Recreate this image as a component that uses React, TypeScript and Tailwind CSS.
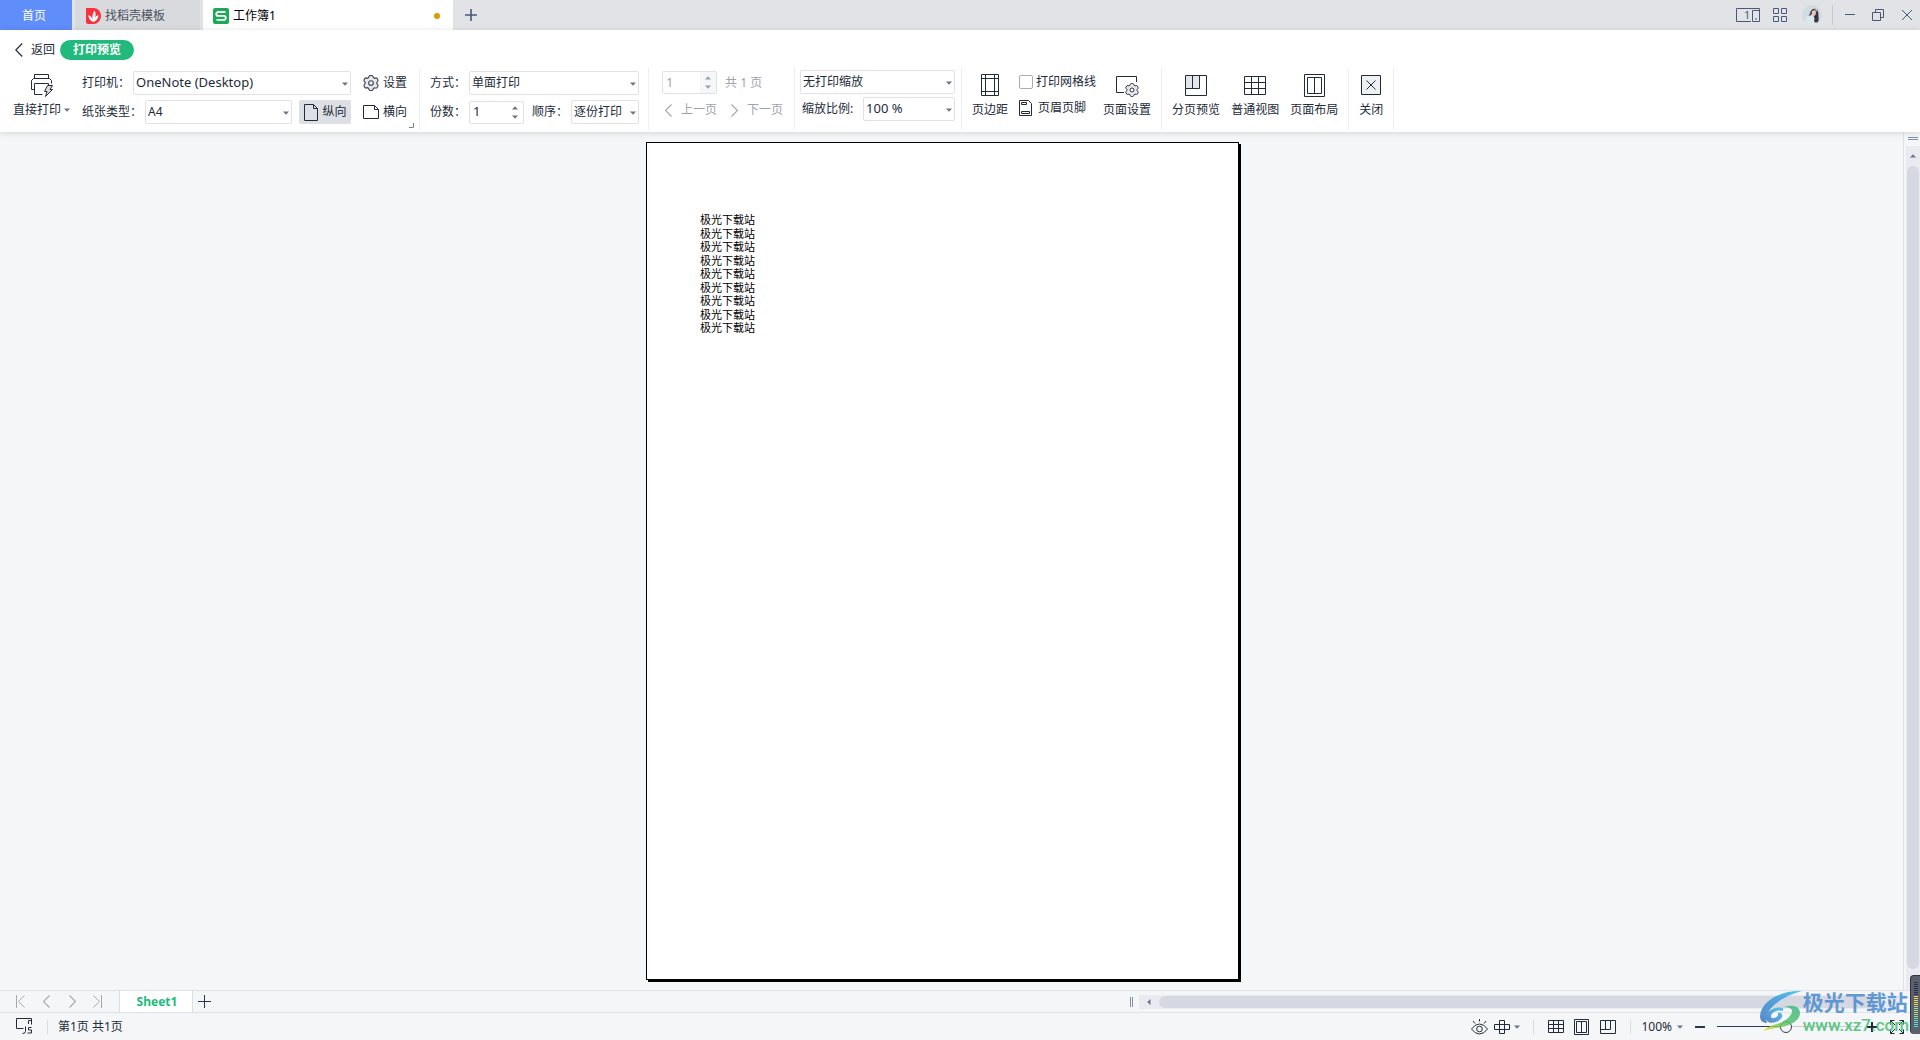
import React, { useState } from 'react';

interface IconProps {
    className?: string;
}

const Caret: React.FC<IconProps> = ({ className = '' }) => (
    <svg width="6" height="4" viewBox="0 0 6 4" className={className}>
        <path d="M0 .5h6L3 3.8z" fill="#6b7488" />
    </svg>
);

const Chevron: React.FC<{ dir: 'left' | 'right'; w?: number; h?: number; className?: string }> = ({ dir, w = 7, h = 13, className = '' }) => (
    <svg width={w} height={h} viewBox="0 0 7 13" fill="none" stroke="currentColor" strokeWidth="1.1" className={className}>
        <path d={dir === 'left' ? 'M6.5 .5l-6 6 6 6' : 'M.5 .5l6 6-6 6'} />
    </svg>
);

const GearShape: React.FC = () => (
    <>
        <path d="M6 1.4L7 .5h2l1 .9.4 1.3 1.1.6 1.5-.4 1.1.5.9 1.7-.3 1.4-.9 1v1.1l.9 1 .3 1.4-.9 1.7-1.1.5-1.5-.4-1.1.6L10 14.6l-1 .9H7l-1-.9-.4-1.3-1.1-.6-1.5.4-1.1-.5L1 10.9l.3-1.4.9-1V7.400l-.9-1L1 5l.9-1.700L3 2.900l1.500.4 1.100-.6z" fill="#e7e9ec" stroke="currentColor" strokeWidth="1.1" />
        <circle cx="8" cy="8" r="2.300" fill="#fff" stroke="currentColor" strokeWidth="1.1" />
    </>
);

const GearIcon: React.FC = () => (
    <svg width="16" height="16" viewBox="0 0 16 16" className="text-[#3b4252]">
        <GearShape />
    </svg>
);

const PrinterIcon: React.FC = () => (
    <svg width="24" height="24" viewBox="0 0 24 24" fill="none" stroke="currentColor">
        <path d="M4.500 5.500v-4h14v4M4.500 16.500h-3v-9l2-2h16l2 2v3M12.500 21.500h-8v-11h14v2" />
        <path d="M17.500 12.500h5l-2.500 4h2.500l-7 7 1.500-5h-2.500z" fill="#d9dce0" />
    </svg>
);

const PortraitIcon: React.FC = () => (
    <svg width="14" height="17" viewBox="0 0 14 17" fill="none" stroke="currentColor">
        <path d="M.5 .5h9l4 4v12H.5zM9.500 .5v4h4" />
    </svg>
);

const LandscapeIcon: React.FC = () => (
    <svg width="16" height="14" viewBox="0 0 16 14" fill="none" stroke="currentColor">
        <path d="M.5 .5h11l4 4v9H.5zM11.500 .5v4h4" />
    </svg>
);

const MarginsIcon: React.FC = () => (
    <svg width="18" height="22" viewBox="0 0 18 22" fill="none" stroke="currentColor">
        <path d="M.5 .5h17v21H.5zM4.500 .5v21M13.500 .5v21M.5 4.500h17M.5 17.500h17" />
    </svg>
);

const HeaderFooterIcon: React.FC = () => (
    <svg width="13" height="16" viewBox="0 0 13 16" fill="none" stroke="currentColor">
        <path d="M.5 .5h9l3 3v12H.5zM2.500 2.500h5v2h-5zM2.500 11.500h8v2h-8z" />
    </svg>
);

const PageSetupIcon: React.FC = () => (
    <svg width="23" height="24" viewBox="0 0 23 24" fill="none" stroke="currentColor">
        <path d="M8 19.500H.5v-16h20V9" />
        <svg x="9" y="10" width="14" height="14" viewBox="0 0 16 16">
            <GearShape />
        </svg>
    </svg>
);

const BreakPreviewIcon: React.FC<{ filled?: boolean; w?: number; h?: number }> = ({ filled, w = 22, h = 21 }) => {
    const x = Math.round(w * 0.64) + 0.5;
    const mid = Math.round(w * 0.32) + 0.5;
    const y = Math.round(h * 0.64) + 0.5;
    return (
        <svg width={w} height={h} fill="none" stroke="currentColor">
            {filled && <path d={`M.5 .5H${x}V${y}H.5z`} fill="#e3e5e8" stroke="none" />}
            <path d={`M.5 .5h${w - 1}v${h - 1}H.5zM.5 ${y}H${x}V.5M${mid} .5V${y}`} />
        </svg>
    );
};

const GridIcon: React.FC<{ w?: number; h?: number }> = ({ w = 22, h = 19 }) => {
    const cx = Math.round((w - 1) / 3);
    const cy = Math.round((h - 1) / 3);
    return (
        <svg width={w} height={h} fill="none" stroke="currentColor">
            <path d={`M.5 .5h${w - 1}v${h - 1}H.5zM${cx + 0.5} .5v${h - 1}M${cx * 2 + 0.5} .5v${h - 1}M.5 ${cy + 0.5}h${w - 1}M.5 ${cy * 2 + 0.5}h${w - 1}`} />
        </svg>
    );
};

const PageLayoutIcon: React.FC<{ w?: number; h?: number; inset?: number }> = ({ w = 21, h = 23, inset = 3 }) => (
    <svg width={w} height={h} fill="none" stroke="currentColor">
        <path d={`M.5 .5h${w - 1}v${h - 1}H.5zM${inset + 0.5} ${inset + 0.5}h${w - 1 - inset * 2}v${h - 1 - inset * 2}h-${w - 1 - inset * 2}zM${Math.floor(w / 2) + 0.5} ${inset + 0.5}v${h - 1 - inset * 2}`} />
    </svg>
);

const CloseBoxIcon: React.FC = () => (
    <svg width="20" height="20" viewBox="0 0 20 20" fill="#eef0f2" stroke="currentColor">
        <path d="M.5 .5h19v19H.5z" />
        <path d="M5.500 5.500l9 9M14.500 5.500l-9 9" />
    </svg>
);

interface SelectProps {
    id: string;
    options: string[];
    className: string;
}

const SelectBox: React.FC<SelectProps> = ({ id, options, className }) => (
    <div className={`relative h-6 ${className}`}>
        <select id={id} aria-label={id} className="h-full w-full appearance-none rounded-xs border border-[#e0e2e7] bg-white pl-0.5 pr-4">
            {options.map((o) => (
                <option key={o}>{o}</option>
            ))}
        </select>
        <Caret className="pointer-events-none absolute right-[3px] top-[11px]" />
    </div>
);

const NumberBox: React.FC<{ id: string; disabled?: boolean }> = ({ id, disabled }) => (
    <div className="flex h-[23px] w-[55px] overflow-hidden rounded-xs border border-[#e0e2e7]">
        <input id={id} aria-label={id} defaultValue="1" disabled={disabled} className="min-w-0 flex-1 pl-[3px] text-[13px]" />
        <div className={`flex w-4 flex-col items-center justify-between py-1 ${disabled ? 'bg-[#f3f4f7] opacity-70' : ''}`}>
            <button aria-label="+" disabled={disabled} className="flex"><Caret className="rotate-180" /></button>
            <button aria-label="-" disabled={disabled} className="flex"><Caret /></button>
        </div>
    </div>
);

const BigButton: React.FC<{ label: string; icon: React.ReactNode; caret?: boolean }> = ({ label, icon, caret }) => (
    <button className="flex flex-col items-center gap-1 self-start pt-0.5">
        <span className="flex h-6 items-center justify-center">{icon}</span>
        <span className="flex items-center leading-[18px]">
            {label}
            {caret && <Caret className="ml-[3px]" />}
        </span>
    </button>
);

const Group: React.FC<{ className: string; children: React.ReactNode }> = ({ className, children }) => (
    <div className={`relative flex h-[62px] shrink-0 border-r border-[#eceef1] ${className}`}>{children}</div>
);

const TitleBar: React.FC = () => (
    <header className="flex h-[30px] shrink-0 bg-[#e1e3e7] text-[#4a5878]">
        <button className="mr-[3px] w-[72px] bg-[#5f8dfa] pr-1 pt-0.5 text-white">首页</button>
        <button className="mr-[3px] flex w-[125px] items-center gap-1 bg-[#d8dade] pl-[11px] pt-px text-[#4b5260]">
            <svg width="15" height="16" viewBox="0 0 15 16">
                <path d="M0 0h7.500a7.500 8 0 010 16H2a2 2 0 01-2-2z" fill="#f9303d" />
                <path d="M7.300 14C4 12.500 2.500 10.500 2.300 7c2 .8 3.700 2.500 4.300 4.600C6 8 6.600 5 8.600 2.500c1.700 3 1.300 6-.6 9 .7-2.300 2.200-3.800 4.500-4.500C12.300 10.800 10.500 13.200 7.300 14z" fill="#fff" />
            </svg>
            找稻壳模板
        </button>
        <div className="flex w-[250px] items-center bg-white pl-2.5 pr-[13px] pt-px text-black">
            <svg width="16" height="16" viewBox="0 0 16 16" className="mr-1">
                <rect width="16" height="16" rx="2" fill="#1bab56" />
                <path d="M12.500 4H5.200a1.600 1.600 0 000 3.900h5.600a1.600 1.600 0 010 4H3.500" fill="none" stroke="#fff" strokeWidth="1.800" />
            </svg>
            工作簿1
            <span className="ml-auto h-1.5 w-1.5 rounded-full bg-[#e39806]" />
        </div>
        <button aria-label="新建" className="pl-3">
            <svg width="12" height="12" viewBox="0 0 12 12" stroke="currentColor" strokeWidth="1.600">
                <path d="M0 6h12M6 0v12" />
            </svg>
        </button>
        <div className="ml-auto flex items-center pr-2">
            <button aria-label="窗口" className="mr-[13px]">
                <svg width="24" height="14" viewBox="0 0 24 14" fill="none" stroke="currentColor">
                    <path d="M15 13.500H.5V.5h23v13h-7v-11h7M19 11h2" />
                    <text x="8" y="11" fontSize="11" fill="currentColor" stroke="none">1</text>
                </svg>
            </button>
            <button aria-label="应用" className="mr-[15px]">
                <svg width="14" height="14" viewBox="0 0 14 14" fill="none" stroke="currentColor">
                    <path d="M.5 .5h5v5h-5zM8.500 .5h5v5h-5zM.5 8.500h5v5h-5zM8.500 8.500h5v5h-5z" />
                </svg>
            </button>
            <button aria-label="账户" className="mr-2.5">
                <svg width="20" height="20" viewBox="0 0 20 20">
                    <circle cx="10" cy="10" r="10" fill="#cfdde2" />
                    <path d="M3 17c1-5 3-7 6-7l4 2v8a10 10 0 01-10-3z" fill="#dbe8ec" />
                    <path d="M8 8c1-3.500 3.500-5 6-4 2.500 1 2.500 4 2.500 7 0 2 .5 4-.5 6-1.500.8-3 .5-4-.5 1-3 .3-4.500-1-6.500z" fill="#3a3340" />
                    <path d="M10 6c1.500-1.500 4-1 4 1.200s-1.200 4.300-2.700 3.800S9.500 8 10 6z" fill="#e8c4bd" />
                    <path d="M6.500 10.500l3-4-.5 4z" fill="#4b4652" />
                    <path d="M12 4.500l3-.5.5 3z" fill="#d6b887" />
                </svg>
            </button>
            <span className="mr-3 h-5 w-px bg-[#c6c9ce]" />
            <button aria-label="最小化" className="mr-[17px]">
                <svg width="10" height="12" viewBox="0 0 10 12" stroke="currentColor">
                    <path d="M0 5.500h10" />
                </svg>
            </button>
            <button aria-label="还原" className="mr-[18px]">
                <svg width="12" height="12" viewBox="0 0 12 12" fill="none" stroke="currentColor">
                    <path d="M.5 3.500h8v8h-8zM3.500 3.500v-3h8v8h-3" />
                </svg>
            </button>
            <button aria-label="关闭窗口">
                <svg width="10" height="10" viewBox="0 0 10 10" stroke="currentColor">
                    <path d="M0 0l10 10M10 0L0 10" />
                </svg>
            </button>
        </div>
    </header>
);

const Ribbon: React.FC = () => {
    const [gridLines, setGridLines] = useState(false);

    return (
        <section className="z-10 shrink-0 bg-white shadow-[0_1px_6px_rgba(0,0,0,0.14)]">
            <div className="flex h-[38px] items-center pl-[15px] pt-px">
                <button className="mr-[5px] flex items-center gap-2">
                    <Chevron dir="left" w={8} h={14} />
                    返回
                </button>
                <span className="flex h-5 w-[74px] items-center justify-center rounded-full bg-[#21ba7c] font-bold text-white">打印预览</span>
            </div>
            <div className="flex h-16">
                <Group className="gap-3 pl-[13px] pr-3 pt-[3px]">
                    <BigButton label="直接打印" icon={<PrinterIcon />} caret />
                    <div className="flex flex-col gap-[5px]">
                        <div className="flex items-center">
                            <label htmlFor="printer" className="w-[51px] whitespace-nowrap">打印机：</label>
                            <SelectBox id="printer" options={['OneNote (Desktop)']} className="mr-3 w-[218px] text-[13px]" />
                            <button className="flex items-center gap-1"><GearIcon />设置</button>
                        </div>
                        <div className="flex items-center">
                            <label htmlFor="paper" className="w-[63px] whitespace-nowrap">纸张类型：</label>
                            <SelectBox id="paper" options={['A4']} className="mr-[7px] w-[147px]" />
                            <button className="mr-3 flex h-6 w-[52px] items-center justify-center gap-[5px] rounded-xs bg-[#dce0e4]"><PortraitIcon />纵向</button>
                            <button className="flex items-center gap-1"><LandscapeIcon />横向</button>
                        </div>
                    </div>
                    <svg width="5" height="5" viewBox="0 0 5 5" fill="none" stroke="#7b8494" className="absolute bottom-0.5 right-[5px]">
                        <path d="M0 4.500h4.500V0" />
                    </svg>
                </Group>
                <Group className="flex-col gap-[5px] pl-2.5 pr-[9px] pt-[3px]">
                    <div className="flex items-center">
                        <label htmlFor="mode" className="w-[39px] whitespace-nowrap">方式：</label>
                        <SelectBox id="mode" options={['单面打印', '双面打印']} className="w-[170px]" />
                    </div>
                    <div className="flex items-center">
                        <label htmlFor="copies" className="w-[39px] whitespace-nowrap">份数：</label>
                        <NumberBox id="copies" />
                        <label htmlFor="order" className="ml-2 w-[39px] whitespace-nowrap">顺序：</label>
                        <SelectBox id="order" options={['逐份打印']} className="w-[68px]" />
                    </div>
                </Group>
                <Group className="flex-col gap-[7px] pl-[13px] pr-[11px] pt-[3px] text-[#a0a3aa]">
                    <div className="flex items-center gap-2">
                        <NumberBox id="page" disabled />
                        <label htmlFor="page">共 1 页</label>
                    </div>
                    <div className="flex items-center pl-[3px]">
                        <button disabled className="mr-3.5 flex items-center gap-[9px] leading-[18px]"><Chevron dir="left" />上一页</button>
                        <button disabled className="flex items-center gap-[9px] leading-[18px]"><Chevron dir="right" />下一页</button>
                    </div>
                </Group>
                <Group className="flex-col gap-[3px] pl-[5px] pr-1.5 pt-0.5">
                    <SelectBox id="scaling" options={['无打印缩放']} className="w-[155px]" />
                    <div className="flex items-center">
                        <label htmlFor="ratio" className="w-[63px] pl-0.5">缩放比例:</label>
                        <SelectBox id="ratio" options={['100 %']} className="w-[92px] text-[13px]" />
                    </div>
                </Group>
                <Group className="px-2.5 pt-[3px]">
                    <BigButton label="页边距" icon={<MarginsIcon />} />
                    <div className="ml-[11px] mr-[7px] flex flex-col items-start gap-2 pt-0.5">
                        <label className="flex items-center gap-[3px] leading-[18px]">
                            <input
                                type="checkbox"
                                checked={gridLines}
                                onChange={(e) => setGridLines(e.target.checked)}
                                className="h-3.5 w-3.5 appearance-none rounded-xs border border-[#a9adb6] bg-white checked:bg-[#21ba7c]"
                            />
                            打印网格线
                        </label>
                        <button className="flex items-center gap-1.5 leading-[18px]"><HeaderFooterIcon />页眉页脚</button>
                    </div>
                    <BigButton label="页面设置" icon={<PageSetupIcon />} />
                </Group>
                <Group className="gap-[11px] px-2.5 pt-[3px]">
                    <BigButton label="分页预览" icon={<BreakPreviewIcon filled />} />
                    <BigButton label="普通视图" icon={<GridIcon />} />
                    <BigButton label="页面布局" icon={<PageLayoutIcon />} />
                </Group>
                <Group className="px-2.5 pt-[3px]">
                    <BigButton label="关闭" icon={<CloseBoxIcon />} />
                </Group>
            </div>
        </section>
    );
};

const rows = Array.from({ length: 9 }, () => '极光下载站');

const Preview: React.FC = () => (
    <main className="flex min-h-0 flex-1">
        <div className="flex flex-1 justify-center py-2.5 pr-[18px]">
            <article className="aspect-[593/838] h-full border border-black bg-white pl-[53px] pt-[70px] text-[11px] text-black shadow-[2px_2px_0_#000]">
                {rows.map((text, i) => (
                    <p key={i} className="h-3.5 leading-3.5 even:h-[13px]">{text}</p>
                ))}
            </article>
        </div>
        <div className="flex w-[17px] flex-col items-center border-l border-[#dfe1e6] pl-0.5">
            <span className="mb-1.5 mt-[5px] h-[3px] w-2.5 border-y border-[#8190a8]" />
            <div className="flex w-full flex-1 flex-col items-center bg-[#e9ebf0]">
                <button aria-label="向上" className="flex h-5 items-center"><Caret className="rotate-180" /></button>
                <span className="w-3 flex-1 rounded-full bg-[#d5d8e0]" />
                <button aria-label="向下" className="flex h-[21px] items-center"><Caret /></button>
            </div>
        </div>
    </main>
);

const SheetBar: React.FC = () => (
    <nav className="flex h-[23px] shrink-0 items-center border-y border-[#e0e2e7] pl-4 text-[#a5a8af]">
        <button aria-label="首个" className="mr-[18px]">
            <svg width="9" height="13" viewBox="0 0 9 13" fill="none" stroke="currentColor"><path d="M.5 0v13M8.500 .5l-6 6 6 6" /></svg>
        </button>
        <button aria-label="上一个" className="mr-[19px]"><Chevron dir="left" /></button>
        <button aria-label="下一个" className="mr-[17px]"><Chevron dir="right" /></button>
        <button aria-label="末个" className="mr-[17px]">
            <svg width="9" height="13" viewBox="0 0 9 13" fill="none" stroke="currentColor"><path d="M8.500 0v13M.5 .5l6 6-6 6" /></svg>
        </button>
        <button className="h-[21px] w-[74px] border-x border-[#dcdfe4] bg-white pl-0.5 font-bold text-[#21ba7c]">Sheet1</button>
        <button aria-label="添加工作表" className="ml-[5px] text-[#2b3448]">
            <svg width="13" height="13" viewBox="0 0 13 13" stroke="currentColor"><path d="M0 6.500h13M6.500 0v13" /></svg>
        </button>
        <div className="ml-[919px] flex min-w-0 flex-1 items-center">
            <span className="mr-1.5 h-2.5 w-[3px] shrink-0 border-x border-[#8190a8]" />
            <div className="flex h-3.5 flex-1 items-center bg-[#e9ebf0]">
                <button aria-label="向左" className="flex w-5 justify-center"><Caret className="rotate-90" /></button>
                <span className="h-3 flex-1 rounded-full bg-[#d5d8e0]" />
                <button aria-label="向右" className="flex w-[21px] justify-center"><Caret className="-rotate-90" /></button>
            </div>
            <span className="w-5" />
        </div>
    </nav>
);

const StatusBar: React.FC = () => {
    const [zoom, setZoom] = useState(47);

    return (
        <footer className="flex h-[27px] shrink-0 items-center pl-4 pr-4">
            <svg width="17" height="17" viewBox="0 0 17 17" fill="none" stroke="currentColor">
                <path d="M5.500 10.500h-5V.5h15v6M2.500 10.500h5M12.500 6V2.500h3" />
                <path d="M9.500 8.500v5q0 2-3 2M15.500 9.500h-3v2.500h3v3h-4" />
            </svg>
            <span className="ml-3.5 mr-2.5 h-3.5 w-px bg-[#d9dce1]" />
            <span>第1页 共1页</span>
            <div className="ml-auto flex items-center">
                <button aria-label="护眼模式" className="mr-1.5">
                    <svg width="17" height="16" viewBox="0 0 17 16" fill="none" stroke="currentColor">
                        <path d="M.5 10q3.500-5 8-5t8 5q-3.500 5-8 5t-8-5zM8.500 0v2.500M2 2l2 2.500M15 2l-2 2.500" />
                        <circle cx="8.500" cy="10" r="2.800" />
                    </svg>
                </button>
                <button aria-label="阅读模式" className="mr-[13px] flex items-center gap-1">
                    <svg width="16" height="16" viewBox="0 0 16 16" fill="none" stroke="currentColor">
                        <path d="M5.500 1.500h5v13h-5zM.5 5.500h15v5H.5z" />
                    </svg>
                    <Caret />
                </button>
                <span className="mr-3.5 h-3.5 w-px bg-[#d9dce1]" />
                <button aria-label="普通视图" className="mr-2.5"><GridIcon w={16} h={13} /></button>
                <button aria-label="页面布局" className="mr-[11px]"><PageLayoutIcon w={15} h={16} inset={2} /></button>
                <button aria-label="分页预览" className="mr-3.5"><BreakPreviewIcon w={16} h={14} /></button>
                <span className="mr-2.5 h-3.5 w-px bg-[#d9dce1]" />
                <button className="mr-3 flex items-center gap-[5px]">100%<Caret /></button>
                <button aria-label="缩小" className="mr-3"><span className="block h-0.5 w-2.5 bg-[#2b3448]" /></button>
                <input
                    type="range"
                    aria-label="缩放"
                    value={zoom}
                    onChange={(e) => setZoom(Number(e.target.value))}
                    className="mr-[5px] h-3 w-[145px] appearance-none bg-[linear-gradient(to_right,#2b3a5e_63px,transparent_63px,transparent_75px,#c9ccd6_75px)] bg-[length:100%_1px] bg-center bg-no-repeat [&::-webkit-slider-thumb]:h-3 [&::-webkit-slider-thumb]:w-3 [&::-webkit-slider-thumb]:appearance-none [&::-webkit-slider-thumb]:rounded-full [&::-webkit-slider-thumb]:border [&::-webkit-slider-thumb]:border-[#3a3f47]"
                />
                <button aria-label="放大" className="mr-[13px]">
                    <svg width="10" height="10" viewBox="0 0 10 10" stroke="currentColor" strokeWidth="2"><path d="M0 5h10M5 0v10" /></svg>
                </button>
                <button aria-label="全屏">
                    <svg width="14" height="14" viewBox="0 0 14 14" fill="none" stroke="currentColor">
                        <path d="M4.500 .5h-4v4M9.500 .5h4v4M.5 9.500v4h4M13.500 9.500v4h-4M.5 .5l4.500 4.500M13.500 .5L9 5M.5 13.500L5 9M13.500 13.500L9 9" />
                    </svg>
                </button>
            </div>
        </footer>
    );
};

const Watermark: React.FC = () => (
    <div className="pointer-events-none absolute bottom-1 right-[11px] z-20 flex gap-px opacity-85">
        <svg width="43" height="42" viewBox="0 0 43 42">
            <defs>
                <linearGradient id="blue" x1="1" y1="0" x2="0" y2="1">
                    <stop offset="0" stopColor="#35bdf0" />
                    <stop offset="1" stopColor="#3f74c0" />
                </linearGradient>
                <linearGradient id="green" x1="1" y1="0" x2="0" y2="1">
                    <stop offset="0" stopColor="#36b98a" />
                    <stop offset=".6" stopColor="#5fc463" />
                    <stop offset="1" stopColor="#f4e52c" />
                </linearGradient>
            </defs>
            <path d="M43 1C22 0 2 11 1 26c0 5 3 7 7 7C4 24 16 8 43 1z" fill="url(#blue)" />
            <path d="M24 18c-7-2-17 2-17 10 0 7 12 6 16-1 1-3-1-5-4-4 1 4-5 7-7 4-1-4 6-8 12-6z" fill="url(#blue)" />
            <path d="M25 17c8-3 16-1 16 6 0 9-13 14-25 15l-12 3c4-4 9-6 14-7 8-2 16-9 15-14-1-2-4-3-8-3z" fill="url(#green)" />
        </svg>
        <div className="whitespace-nowrap">
            <div className="text-[21px] font-bold leading-6 text-[#4a8bd0]">极光下载站</div>
            <div className="text-[17px] font-medium leading-[22px] text-[#43bf70] [font-family:Roboto,sans-serif]">www.xz7.com</div>
        </div>
    </div>
);

const meterBars = Array.from({ length: 23 }, (_, i) => i);

const LevelMeter: React.FC = () => (
    <div className="absolute bottom-[6px] right-0 z-30 flex h-[59px] w-2.5 flex-col items-end gap-px rounded-l border-l border-t border-[#2f3540] bg-[#5a6070] pr-0.5 pt-1.5">
        {meterBars.map((i) => (
            <span key={i} className={`h-px w-1 ${i < 7 ? 'bg-[#2c313b]' : i < 12 ? 'bg-[#f1d64a]' : i < 18 ? 'bg-[#a5e07a]' : 'bg-[#5fe0c0]'}`} />
        ))}
    </div>
);

const App: React.FC = () => (
    <div className="relative flex h-screen flex-col overflow-hidden bg-[#f5f6f8] text-xs text-[#232b3a] [font-family:'Noto_Sans','Noto_Sans_CJK_SC',sans-serif]">
        <TitleBar />
        <Ribbon />
        <Preview />
        <SheetBar />
        <StatusBar />
        <Watermark />
        <LevelMeter />
    </div>
);

export default App;
